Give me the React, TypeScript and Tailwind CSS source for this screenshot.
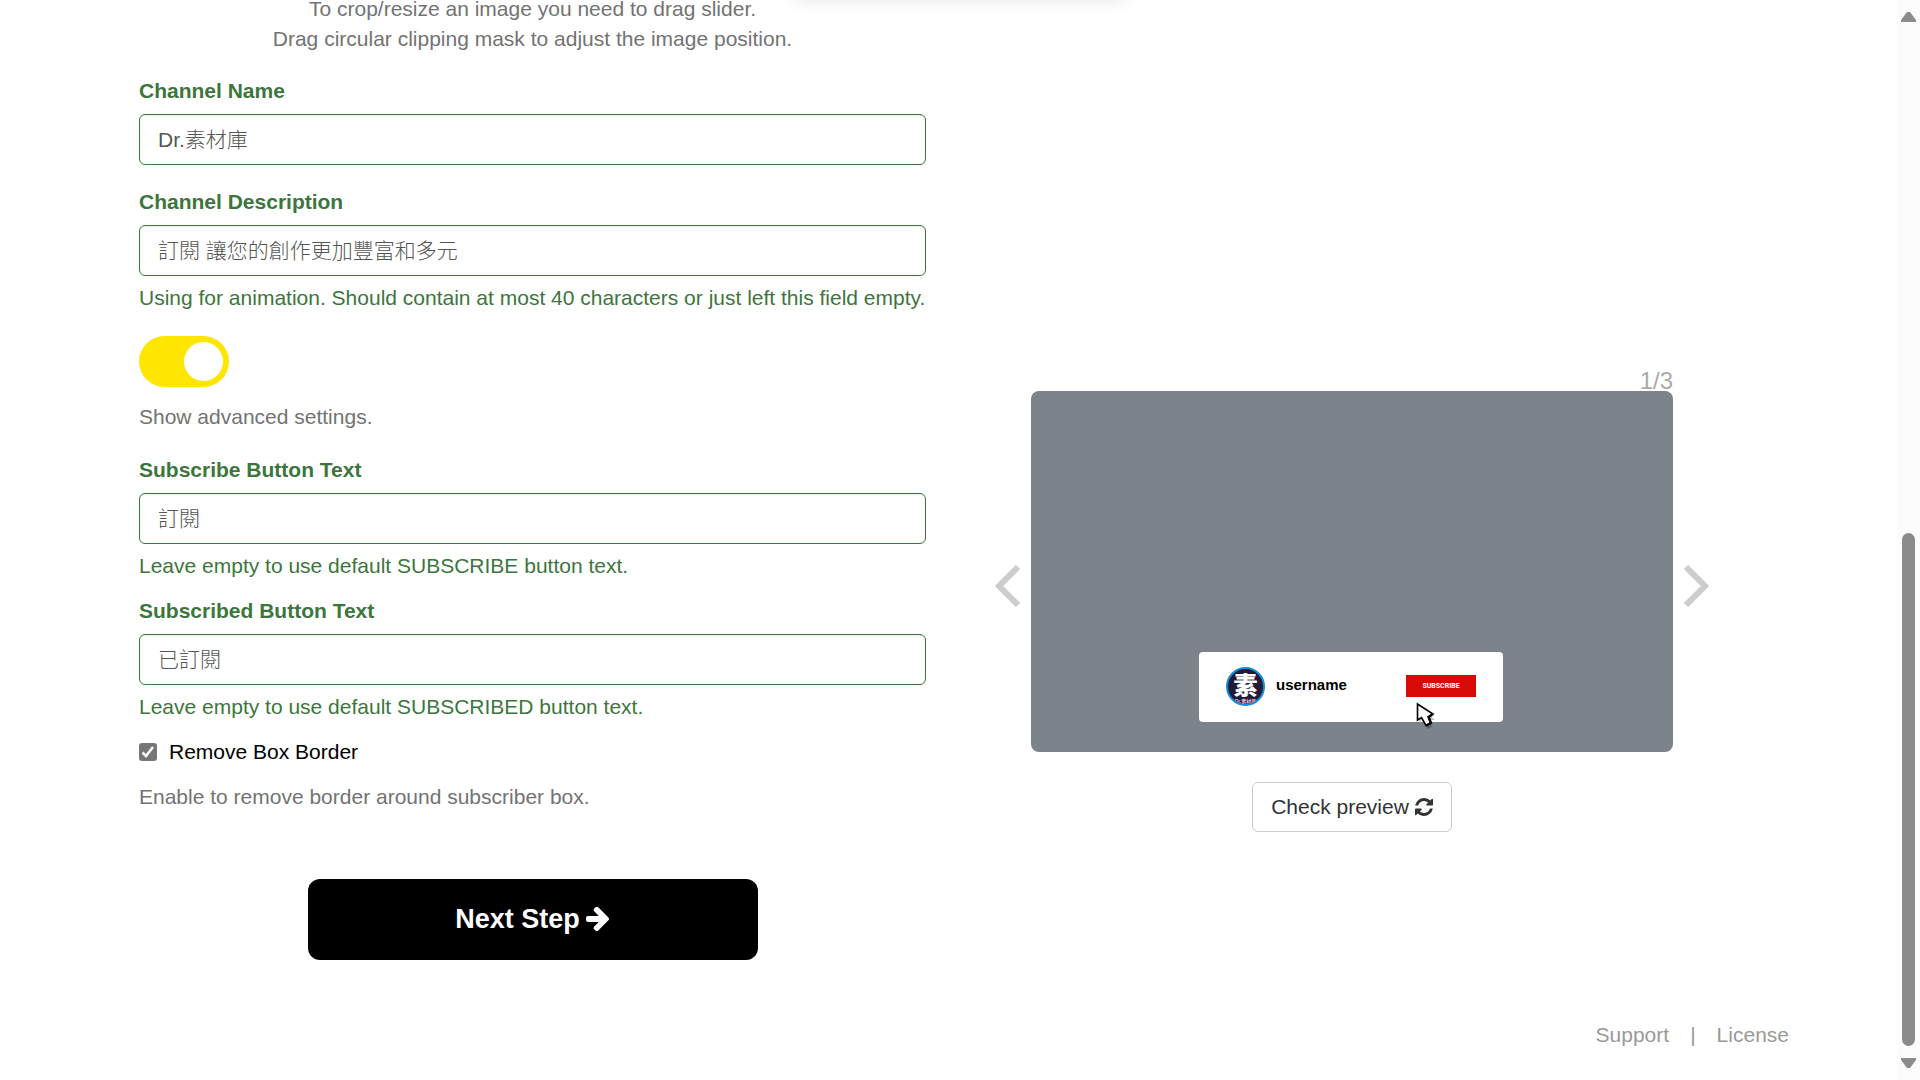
import React from "react";

type FieldProps = {
  id: string;
  label: string;
  value: string;
  help?: string;
};

function Field({ id, label, value, help }: FieldProps) {
  return (
    <div className="text-[#3c763d]">
      <label htmlFor={id} className="mb-2 block font-bold">
        {label}
      </label>
      <input
        id={id}
        type="text"
        defaultValue={value}
        className="block h-[51px] w-full rounded-md border border-[#3c763d] bg-white px-[18px] pb-[3px] font-light text-[#555] shadow-[inset_0_1px_2px_rgba(0,0,0,0.075)] outline-none"
      />
      {help && <p className="mt-[7px]">{help}</p>}
    </div>
  );
}

function Chevron({ direction }: { direction: "left" | "right" }) {
  return (
    <button
      type="button"
      aria-label={direction === "left" ? "Previous preview" : "Next preview"}
      className="shrink-0 pt-[29px]"
    >
      <svg width="25" height="42" viewBox="0 0 25 42" fill="none" stroke="#ccc" strokeWidth="6">
        <path d={direction === "left" ? "M23 2L4 21L23 40" : "M2 2L21 21L2 40"} />
      </svg>
    </button>
  );
}

function RefreshIcon() {
  return (
    <svg width="18" height="18" viewBox="0 0 1536 1536" fill="currentColor" aria-hidden="true">
      <path d="M1511 928q0 5-1 7-64 268-268 434.5t-478 166.5q-146 0-282.5-55t-243.5-157l-129 129q-19 19-45 19t-45-19-19-45v-448q0-26 19-45t45-19h448q26 0 45 19t19 45-19 45l-137 137q71 66 161 102t187 36q134 0 250-65t186-179q11-17 53-117 8-23 30-23h192q13 0 22.5 9.5t9.5 22.5zm25-800v448q0 26-19 45t-45 19h-448q-26 0-45-19t-19-45 19-45l138-138q-148-137-349-137-134 0-250 65t-186 179q-11 17-53 117-8 23-30 23h-199q-13 0-22.5-9.5t-9.5-22.5v-7q65-268 270-434.5t480-166.5q146 0 284 55.5t245 156.5l130-129q19-19 45-19t45 19 19 45z" />
    </svg>
  );
}

function ArrowIcon() {
  return (
    <svg width="24" height="26" viewBox="0 132 1536 1664" fill="currentColor" aria-hidden="true">
      <path d="M1472 960q0 54-37 91l-651 651q-39 37-91 37-51 0-90-37l-75-75q-38-38-38-91t38-91l293-293h-704q-52 0-84.5-37.5t-32.5-90.5v-128q0-53 32.5-90.5t84.5-37.5h704l-293-294q-38-36-38-90t38-90l75-75q38-38 90-38 53 0 91 38l651 651q37 35 37 90z" />
    </svg>
  );
}

function Preview() {
  return (
    <div className="flex aspect-[642/361] flex-1 items-end justify-center rounded-lg bg-[#7c838a] pr-0.5 pb-[30px]">
      <div className="relative flex h-[70px] w-[304px] items-center rounded bg-white px-[27px] pb-0.5">
        <div className="relative flex size-[39px] items-center justify-center overflow-hidden rounded-full border-2 border-[#168bd8] bg-[#201c38]">
          <span className="text-2xl leading-6 font-black text-white">素</span>
          <span className="absolute inset-x-0 bottom-0 text-center text-[5px] leading-[6px] font-bold whitespace-nowrap text-[#f5b5d5]">
            Dr.素材庫
          </span>
        </div>
        <span className="ml-[11px] pb-0.5 text-[15px] leading-5 font-bold text-black">username</span>
        <span className="ml-auto flex h-[22px] w-[70px] items-center justify-center bg-[#d80a05] font-[Roboto] text-[7px] font-bold text-white">
          SUBSCRIBE
        </span>
        <svg
          className="absolute top-[50px] left-[217px]"
          width="20"
          height="28"
          viewBox="0 0 20 28"
          aria-hidden="true"
        >
          <path d="M3 4V20L7 17L11 27L16 25L13 18H19Z" fill="#000" opacity="0.25" />
          <path
            d="M1.500 2V18L5.500 15.500L10 23.500L15 21L12.500 15L17 12Z"
            fill="#fff"
            stroke="#000"
            strokeWidth="1.6"
          />
          <path d="M10 23.500L15 21L12.500 15L17 12" fill="none" stroke="#000" strokeWidth="2.4" />
        </svg>
      </div>
    </div>
  );
}

function Scrollbar() {
  return (
    <div className="sticky top-0 flex h-screen w-[23px] shrink-0 flex-col items-center bg-[#fcfcfc] py-3 text-[#8b8b8b]">
      <svg width="15" height="10" viewBox="0 0 15 10" fill="currentColor" aria-hidden="true">
        <path d="M6 0H9L15 8V10H0V8Z" />
      </svg>
      <div className="mt-auto mb-3 h-[513px] w-[13px] rounded-full bg-[#8b8b8b]" />
      <svg width="15" height="10" viewBox="0 0 15 10" fill="currentColor" aria-hidden="true">
        <path d="M0 0H15V2L9 10H6L0 2Z" />
      </svg>
    </div>
  );
}

export default function App() {
  return (
    <div className="flex min-h-screen overflow-hidden bg-white font-['Liberation_Sans','Noto_Sans_CJK_TC',sans-serif] text-[21px] leading-[30px]">
      <div className="relative min-w-0 flex-1">
        <div className="absolute inset-x-0 -top-5 ml-[22px] flex justify-center">
          <div className="h-5 w-[330px] shadow-[0_0_16px_rgba(0,0,0,0.1)]" />
        </div>
        <main className="grid grid-cols-2 pr-[135px] pl-[122px]">
          <form className="pr-4 pl-[17px]" onSubmit={(e) => e.preventDefault()}>
            <p className="-mt-1.5 text-center text-[#737373]">
              To crop/resize an image you need to drag slider.
              <br />
              Drag circular clipping mask to adjust the image position.
            </p>

            <div className="mt-[22px] flex flex-col gap-[22px]">
              <Field id="channel-name" label="Channel Name" value="Dr.素材庫" />
              <Field
                id="channel-description"
                label="Channel Description"
                value="訂閱 讓您的創作更加豐富和多元"
                help="Using for animation. Should contain at most 40 characters or just left this field empty."
              />
            </div>

            <div className="mt-[23px]">
              <input
                id="advanced"
                type="checkbox"
                role="switch"
                defaultChecked
                className="block h-[51px] w-[90px] appearance-none rounded-full bg-[#ccc] p-1.5 before:block before:size-[39px] before:rounded-full before:bg-white checked:bg-[#ffe600] checked:before:ml-auto"
              />
              <label htmlFor="advanced" className="mt-[15px] block text-[#737373]">
                Show advanced settings.
              </label>
            </div>

            <div className="mt-[23px] flex flex-col gap-[15px]">
              <Field
                id="subscribe-text"
                label="Subscribe Button Text"
                value="訂閱"
                help="Leave empty to use default SUBSCRIBE button text."
              />
              <Field
                id="subscribed-text"
                label="Subscribed Button Text"
                value="已訂閱"
                help="Leave empty to use default SUBSCRIBED button text."
              />
              <label htmlFor="remove-border" className="flex items-center text-black">
                <input
                  id="remove-border"
                  type="checkbox"
                  defaultChecked
                  className="peer size-[18px] appearance-none rounded-[3px] border-2 border-[#767676] checked:bg-[#767676]"
                />
                <svg
                  className="invisible -ml-[18px] peer-checked:visible"
                  width="18"
                  height="18"
                  viewBox="0 0 18 18"
                  fill="none"
                  stroke="#fff"
                  strokeWidth="2.5"
                  aria-hidden="true"
                >
                  <path d="M3.500 9.500L7 13L14 4" />
                </svg>
                <span className="ml-3">Remove Box Border</span>
              </label>
              <p className="text-[#737373]">Enable to remove border around subscriber box.</p>
            </div>

            <button
              type="submit"
              className="mx-auto mt-[67px] flex h-[81px] w-full max-w-[450px] items-center justify-center gap-1.5 rounded-xl bg-black pb-0.5 text-[27px] font-bold text-white"
            >
              Next Step
              <ArrowIcon />
            </button>
          </form>

          <section className="flex flex-col px-[53px] pt-[369px]" aria-label="Preview">
            <p className="-mb-0.5 pr-9 text-right text-2xl leading-6 text-[#aaa]">1/3</p>
            <div className="flex items-center gap-[11px]">
              <Chevron direction="left" />
              <Preview />
              <Chevron direction="right" />
            </div>
            <button
              type="button"
              className="mx-auto mt-[30px] flex h-[50px] items-center gap-1.5 rounded-md border border-[#ccc] bg-white px-[18px] text-[#333]"
            >
              Check preview
              <RefreshIcon />
            </button>
          </section>
        </main>

        <footer className="mt-[60px] flex justify-end gap-[21px] pr-[108px] text-[#999]">
          <a href="#support">Support</a>
          <span>|</span>
          <a href="#license">License</a>
        </footer>
      </div>
      <Scrollbar />
    </div>
  );
}
